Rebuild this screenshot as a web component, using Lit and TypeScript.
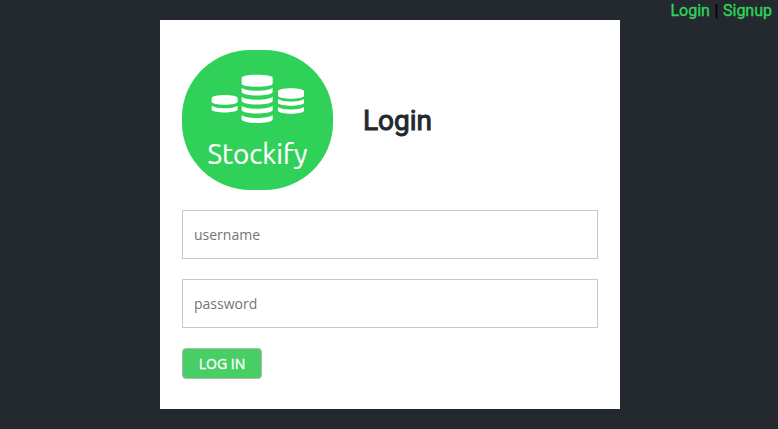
import { LitElement, html, css, svg } from "lit";
import { customElement } from "lit/decorators.js";

interface Stack { x: number; w: number; top: number; h: number; bands: number[]; }

const stacks: Stack[] = [
  { x: 20, w: 78, top: 81, h: 29, bands: [113] },
  { x: 110, w: 93, top: 20, h: 36, bands: [59, 86, 113, 141] },
  { x: 219, w: 78, top: 61, h: 31, bands: [93, 117] },
];

@customElement("stockify-logo")
export class StockifyLogo extends LitElement {
  static styles = css`
    :host { display: block; width: 151px; height: 140px; flex: none; }
    svg { display: block; width: 100%; height: 100%; }
    .disc { fill: #30d158; }
    .coin { fill: #fff; }
    .name { fill: #fff; stroke: #fff; stroke-width: 0.2px; font: 27.5px Ubuntu, "Noto Sans", "Open Sans", sans-serif; }
  `;

  private coin({ x, w, top, h }: Stack) {
    const r = x + w, b = top + h;
    return svg`<path class="coin" d="M${x} ${top + 9}C${x} ${top - 3} ${r} ${top - 3} ${r} ${top + 9}V${b - 9}C${r} ${b + 3} ${x} ${b + 3} ${x} ${b - 9}Z"/>`;
  }

  private band({ x, w }: Stack, y: number) {
    const r = x + w, big = w > 80, t = big ? 14 : 12, c = big ? 12 : 10;
    return svg`<path class="coin" d="M${x} ${y}C${x + 14} ${y + c} ${r - 14} ${y + c} ${r} ${y}V${y + t}C${r - 8} ${y + t + c + 1} ${x + 8} ${y + t + c + 1} ${x} ${y + t}Z"/>`;
  }

  render() {
    return html`<svg viewBox="0 0 151 140" role="img" aria-label="Stockify">
      <rect class="disc" width="151" height="140" rx="69" ry="67"/>
      <g transform="translate(23 18) scale(.33333)">
        ${stacks.map((s) => svg`${this.coin(s)}${s.bands.map((y) => this.band(s, y))}`)}
      </g>
      <text class="name" x="25.5" y="114" textLength="100" lengthAdjust="spacingAndGlyphs">Stockify</text>
    </svg>`;
  }
}

@customElement("app-root")
export class AppRoot extends LitElement {
  static styles = css`
    :host {
      display: block;
      box-sizing: border-box;
      height: 429px;
      background: #24282f;
      font-family: Roboto, sans-serif;
      color: #24282f;
    }
    * { box-sizing: border-box; }
    nav {
      height: 20px;
      padding-right: 6px;
      text-align: right;
      font-size: 16px;
      line-height: 21px;
      color: #000;
      word-spacing: 0.6px;
      -webkit-text-stroke: 0.4px currentColor;
    }
    nav a { color: #30d158; text-decoration: none; }
    .card {
      width: 460px;
      height: 389px;
      margin: 0 auto 0 160px;
      padding: 30px 22px;
      background: #fff;
    }
    header { display: flex; align-items: center; gap: 30px; margin-bottom: 20px; }
    h1 {
      margin: 2px 0 0;
      font-size: 28px;
      line-height: 34px;
      font-weight: 400;
      -webkit-text-stroke: 1px #24282f;
    }
    input {
      display: block;
      width: 416px;
      height: 49px;
      margin: 0 0 20px;
      padding: 0 11px;
      border: 1px solid #c8c8c8;
      border-radius: 0;
      font: 14px "Open Sans", sans-serif;
      outline: none;
    }
    input::placeholder { color: #757575; opacity: 1; }
    button {
      display: block;
      width: 80px;
      height: 31px;
      padding: 0;
      border: 1px solid #b5b5b5;
      border-radius: 4px;
      background: #47cf63;
      color: #fff;
      font: 14px "Open Sans", sans-serif;
      -webkit-text-stroke: 0.35px #fff;
    }
  `;

  render() {
    return html`
      <nav><a href="#login">Login</a> | <a href="#signup">Signup</a></nav>
      <form class="card">
        <header><stockify-logo></stockify-logo><h1>Login</h1></header>
        <input type="text" placeholder="username">
        <input type="password" placeholder="password">
        <button type="button">LOG IN</button>
      </form>`;
  }
}
